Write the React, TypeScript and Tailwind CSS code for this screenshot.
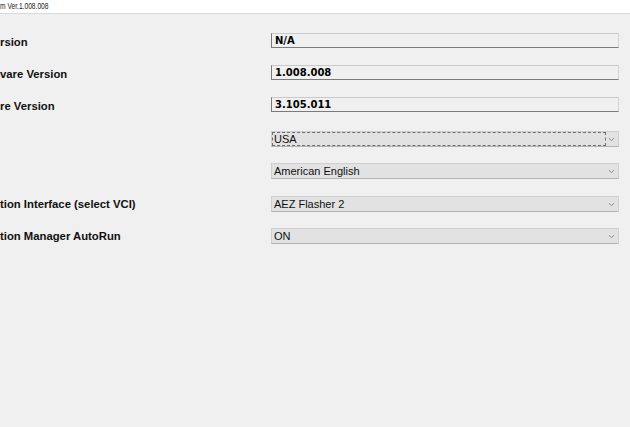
import React from "react";

interface InfoRow {
    label: string,
    value: string,
}

const infoRows: InfoRow[] = [
    { label: "rsion", value: "N/A" },
    { label: "vare Version", value: "1.008.008" },
    { label: "re Version", value: "3.105.011" },
];

interface SelectRow {
    label: string,
    value: string,
    focused?: boolean,
    spacing: string,
}

const selectRows: SelectRow[] = [
    { label: "", value: "USA", focused: true, spacing: "mt-[19px]" },
    { label: "", value: "American English", spacing: "mt-[16px]" },
    { label: "tion Interface (select VCI)", value: "AEZ Flasher 2", spacing: "mt-[17px]" },
    { label: "tion Manager AutoRun", value: "ON", spacing: "mt-[16px]" },
];

const labelFont = { fontFamily: '"Liberation Sans", Arial, sans-serif' };
const valueFont = { fontFamily: '"DejaVu Sans", Verdana, sans-serif' };

/** 콤보박스 화살표 */
const Chevron = () => (
    <svg width="7" height="5" viewBox="0 0 7 5" className="shrink-0">
        <path d="M1 1.2 L3.5 3.6 L6 1.2" fill="none" stroke="#8a8a8a" strokeWidth="1" />
    </svg>
);

export default function App() {
    return (
        <div className="w-[630px] h-[427px] bg-[#f0f0f0] overflow-hidden text-[#111]">
            {/* title strip */}
            <div className="h-[14px] bg-white border-b border-[#dadada] flex items-center overflow-hidden">
                <span
                    className="inline-block text-[9px] leading-none text-[#222] scale-x-[0.74] origin-left whitespace-nowrap"
                    style={labelFont}
                >
                    m Ver.1.008.008
                </span>
            </div>

            <div className="pt-[19px]">
                <div className="flex flex-col gap-[17px]">
                    {infoRows.map((row) => (
                        <div key={row.value} className="flex items-center h-[15px]">
                            <div
                                className="w-[271px] text-[11.3px] font-bold whitespace-nowrap pt-[3px]"
                                style={labelFont}
                            >
                                {row.label}
                            </div>
                            <div
                                className="w-[348px] h-[15px] flex items-center pl-[3px] border-l border-t border-b border-r border-l-[#7a7a7a] border-b-[#7a7a7a] border-t-[#c9c9c9] border-r-[#d2d2d2] bg-[#f0f0f0] text-[10px] font-bold text-black"
                                style={valueFont}
                            >
                                {row.value}
                            </div>
                        </div>
                    ))}
                </div>

                <div className="flex flex-col">
                    {selectRows.map((row) => (
                        <div key={row.value} className={`flex items-center h-[16px] ${row.spacing}`}>
                            <div
                                className="w-[271px] text-[11.3px] font-bold whitespace-nowrap pt-[1px]"
                                style={labelFont}
                            >
                                {row.label}
                            </div>
                            <div className="w-[348px] h-[16px] flex items-center bg-[#e2e2e2] border border-[#cfcfcf] border-b-[#b4b4b4] pr-[3px]">
                                <div
                                    className={
                                        row.focused
                                            ? "flex-1 h-[14px] flex items-center pl-[1px] border border-dashed border-[#6f6f6f] text-[11px] text-[#111]"
                                            : "flex-1 h-[14px] flex items-center pl-[2px] text-[11px] text-[#111]"
                                    }
                                    style={labelFont}
                                >
                                    {row.value}
                                </div>
                                <div className="w-[9px] flex justify-end">
                                    <Chevron />
                                </div>
                            </div>
                        </div>
                    ))}
                </div>
            </div>
        </div>
    );
}
